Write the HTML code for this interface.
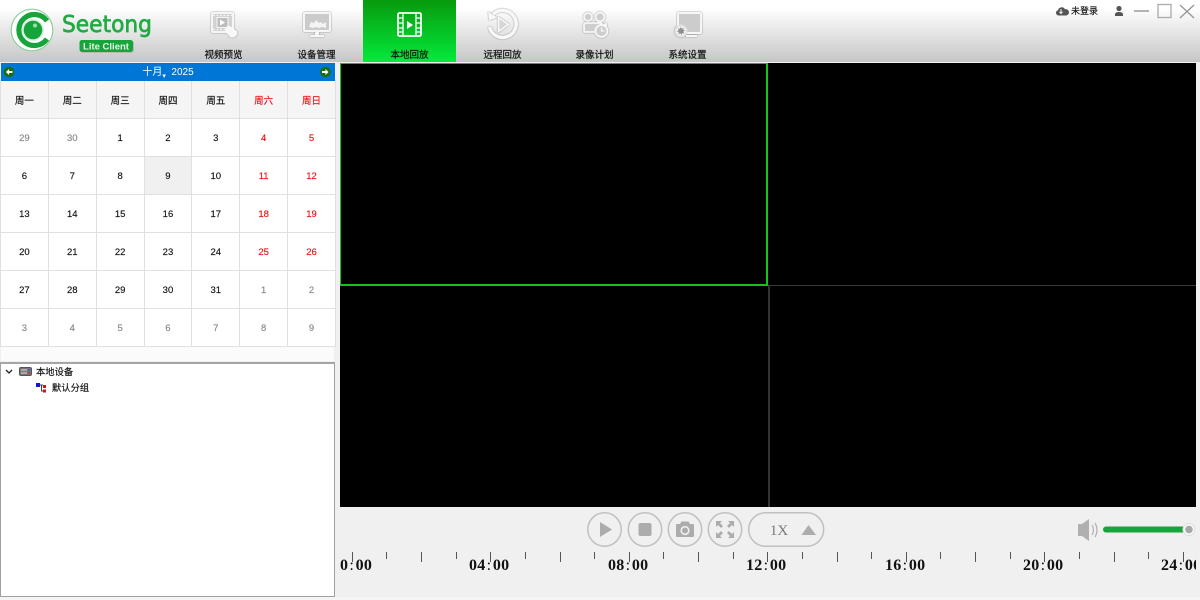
<!DOCTYPE html>
<html lang="zh">
<head>
<meta charset="utf-8">
<title>Seetong</title>
<style>
html,body{margin:0;padding:0}
body{width:1200px;height:600px;position:relative;overflow:hidden;background:#f0f0f0;font-family:"Liberation Sans","Noto Sans CJK SC",sans-serif;color:#111}
.abs{position:absolute}
#top{left:0;top:0;width:1200px;height:62px;background:linear-gradient(#fff 0,#fff 8px,#c6c6c6 62px)}
#active{left:363px;top:0;width:93px;height:62px;background:linear-gradient(#079a0d,#03ea3b)}
.nav{position:absolute;top:48px;width:93px;text-align:center;font-size:9.5px;line-height:15px;color:#111;white-space:nowrap;-webkit-text-stroke:.2px #111}
svg{position:absolute;overflow:visible}
#calbar{left:1px;top:63px;width:334px;height:18px;background:#0076d6;color:#fff;font-size:10px;line-height:20px;text-align:center}
table{position:absolute;left:0;top:80px;width:336px;height:267px;border-collapse:collapse;table-layout:fixed;background:#fff}
td{border:1px solid #e0e0e0;text-align:center;font-size:9.5px;padding:2px 0 0;color:#111;-webkit-text-stroke:.15px;box-sizing:border-box;height:38px}
tr:first-child td{background:#f5f5f5;padding:0}
.r{color:#f01010}.g{color:#888}
#strip{left:1px;top:347px;width:333px;height:14px;background:#fbfbfb}
#tree{left:0;top:362px;width:333px;height:232px;background:#fff;border:1px solid #a0a0a0;border-top:2px solid #a6a6a6}
.t{position:absolute;font-size:9.3px;line-height:14px;color:#111;white-space:nowrap;-webkit-text-stroke:.15px #111}
#video{left:340px;top:63px;width:856px;height:444px;background:#000}
.tl{position:absolute;top:557px;font-family:"Liberation Serif","Noto Serif CJK SC",serif;font-size:16px;line-height:18px;font-weight:700;color:#111;letter-spacing:.3px;white-space:nowrap}
.tl i{font-style:normal;font-weight:400;margin:0 1.500px 0 1px}
.tick{position:absolute;top:552px;width:1px;background:#555}
.ic{filter:drop-shadow(0 0 .8px #777)}
</style>
</head>
<body>
<div id="top" class="abs"></div>
<div id="active" class="abs"></div>

<!-- logo -->
<svg style="left:0;top:0" width="170" height="62" viewBox="0 0 170 62">
  <circle cx="32" cy="30" r="20.800" fill="#fff" stroke="#8fd09a" stroke-width="1.200"/>
  <path d="M47 21A15.500 15.500 0 1 0 47 39" fill="none" stroke="#16a53a" stroke-width="5.200"/>
  <circle cx="33" cy="30" r="11" fill="#d8f0dc"/>
  <circle cx="33" cy="30" r="9.300" fill="#16a53a"/>
  <circle cx="35" cy="25.500" r="2" fill="#9be0a8"/>
  <rect x="81" y="41" width="53" height="12" rx="2.500" fill="#b8b8b8"/>
  <rect x="79.500" y="40" width="53.500" height="12" rx="2.500" fill="#16a53a"/>
  <text x="106" y="49.500" text-anchor="middle" font-family="Liberation Sans" font-size="9.500" font-weight="700" fill="#e6f8e8">Lite Client</text>
  <text x="62" y="32" font-family="DejaVu Sans" font-size="23.500" fill="#20ab45" stroke="#20ab45" stroke-width=".7" textLength="90" lengthAdjust="spacingAndGlyphs">Seetong</text>
</svg>

<!-- nav icons -->
<svg style="left:0;top:0" width="720" height="46" viewBox="0 0 720 46" fill="none">
  <!-- video preview -->
  <g class="ic">
    <rect x="212" y="13" width="21" height="19" rx="1" fill="#d2d2d2" stroke="#f6f6f6" stroke-width="2"/>
    <rect x="217" y="17.500" width="11" height="10" fill="#bdbdbd" stroke="#f6f6f6" stroke-width="1"/>
    <path d="M220 19.500l5 3-5 3z" fill="#fff"/>
    <path d="M213 15.500h19M213 29.500h19" stroke="#f6f6f6" stroke-dasharray="2 1.500"/>
    <path d="M226 27l3-1.500 8 5.500c1 2-.4 5.500-3 6.500h-3.500l-5.500-6z" fill="#f8f8f8"/>
  </g>
  <!-- device mgmt -->
  <g class="ic">
    <rect x="304" y="13" width="26" height="18" rx="1" fill="#cbcbcb" stroke="#f6f6f6" stroke-width="2"/>
    <path d="M309 27l2-5 3 1 2-3 3 3 2-1 2 2 3-2v6l-4-1-3 1-3-1-3 1z" fill="#f4f4f4"/>
    <path d="M317 32v3" stroke="#f6f6f6" stroke-width="4"/>
    <path d="M310 36h14" stroke="#f6f6f6" stroke-width="2.200"/>
  </g>
  <!-- local playback -->
  <g stroke="#fff">
    <rect x="398" y="13" width="23" height="23" rx="1.500" stroke-width="1.800"/>
    <path d="M403 13v23M416 13v23M398 18h5M398 23h5M398 28h5M398 32h5M416 18h5M416 23h5M416 28h5M416 32h5" stroke-width="1.300"/>
    <path d="M407 21l6 4-6 4z" fill="#fff" stroke="none"/>
  </g>
  <!-- remote playback -->
  <g class="ic">
    <path d="M493 14.500A13.500 13.500 0 1 1 489.500 27" stroke="#f8f8f8" stroke-width="3.500"/>
    <path d="M488 11.500l1 9 8-3z" fill="#f8f8f8"/>
    <path d="M498.500 17.500l10 7-10 7z" fill="#d6d6d6" stroke="#f8f8f8" stroke-width="1.600" stroke-linejoin="round"/>
  </g>
  <!-- record plan -->
  <g class="ic" fill="#cecece" stroke="#f8f8f8" stroke-width="1.800">
    <circle cx="588" cy="17" r="4"/><circle cx="600" cy="17" r="4.500"/>
    <rect x="584" y="23" width="18" height="9" rx="1.500"/>
    <path d="M602 26l4-2v6"/>
    <circle cx="601.500" cy="31" r="6"/>
    <path d="M601.500 27.500v3.500h3" fill="none" stroke-width="1.200"/>
  </g>
  <!-- settings -->
  <g class="ic">
    <rect x="678" y="13" width="23" height="20" rx="1" fill="#cccccc" stroke="#f6f6f6" stroke-width="2"/>
    <path d="M686 36h11" stroke="#f6f6f6" stroke-width="2.200"/>
    <circle cx="681" cy="31" r="6.500" fill="#e2e2e2"/>
    <circle cx="681" cy="31" r="3.800" fill="#8f8f8f" stroke="#f6f6f6" stroke-width="2" stroke-dasharray="2 1"/>
  </g>
</svg>
<div class="nav" style="left:177px">视频预览</div>
<div class="nav" style="left:270px">设备管理</div>
<div class="nav" style="left:363px">本地回放</div>
<div class="nav" style="left:456px">远程回放</div>
<div class="nav" style="left:548px">录像计划</div>
<div class="nav" style="left:641px">系统设置</div>

<!-- window controls -->
<svg style="left:1040px;top:0" width="160" height="30" viewBox="0 0 160 30">
  <path d="M18.500 15.500a2.700 2.700 0 0 1-.5-5.300 3.800 3.800 0 0 1 7-1 3.200 3.200 0 0 1 1.500 6.300z" fill="#555"/>
  <path d="M21.500 9v2.800h1.700l-2.200 2.400-2.200-2.400h1.700V9z" fill="#eee"/>
  <circle cx="79" cy="8.500" r="2.600" fill="#555"/>
  <path d="M75 16v-1.500q0-2.500 4-2.500t4 2.500V16z" fill="#555"/>
  <path d="M94 11h15" stroke="#999" stroke-width="1.500"/>
  <rect x="118" y="4.500" width="13" height="13" fill="none" stroke="#aaa" stroke-width="1.300"/>
  <path d="M140 5l14 13M154 5l-14 13" stroke="#999" stroke-width="1.400"/>
</svg>
<div class="t" style="left:1071px;top:4px;font-size:9px">未登录</div>

<!-- calendar -->
<table>
<tr><td>周一</td><td>周二</td><td>周三</td><td>周四</td><td>周五</td><td class="r">周六</td><td class="r">周日</td></tr>
<tr><td class="g">29</td><td class="g">30</td><td>1</td><td>2</td><td>3</td><td class="r">4</td><td class="r">5</td></tr>
<tr><td>6</td><td>7</td><td>8</td><td style="background:#f0f0f0">9</td><td>10</td><td class="r">11</td><td class="r">12</td></tr>
<tr><td>13</td><td>14</td><td>15</td><td>16</td><td>17</td><td class="r">18</td><td class="r">19</td></tr>
<tr><td>20</td><td>21</td><td>22</td><td>23</td><td>24</td><td class="r">25</td><td class="r">26</td></tr>
<tr><td>27</td><td>28</td><td>29</td><td>30</td><td>31</td><td class="g">1</td><td class="g">2</td></tr>
<tr><td class="g">3</td><td class="g">4</td><td class="g">5</td><td class="g">6</td><td class="g">7</td><td class="g">8</td><td class="g">9</td></tr>
</table>
<div id="calbar" class="abs">十月<span style="font-size:7px;position:relative;top:3px">▾</span>&nbsp;&nbsp;2025</div>
<svg style="left:3px;top:65px" width="330" height="14" viewBox="0 0 330 14">
  <circle cx="6" cy="7" r="5.300" fill="#1c6e12"/><path d="M3 7l3-3v2h3.500v2H6v2z" fill="#fff"/>
  <circle cx="322.500" cy="7" r="5.300" fill="#1c6e12"/><path d="M325.500 7l-3-3v2H319v2h3.500v2z" fill="#fff"/>
</svg>
<div id="strip" class="abs"></div>

<!-- tree -->
<div id="tree" class="abs"></div>
<svg style="left:0;top:362px" width="100" height="36" viewBox="0 0 100 36">
  <path d="M6 8l3 3 3-3" fill="none" stroke="#222" stroke-width="1.300"/>
  <rect x="19.500" y="5.500" width="12" height="8" rx="1.500" fill="#777" stroke="#555"/>
  <path d="M21 8h6M21 11h6" stroke="#ddd"/>
  <rect x="28" y="7" width="2" height="1.500" fill="#36c"/><rect x="28" y="10" width="2" height="1.500" fill="#c33"/>
  <rect x="36" y="21" width="4" height="4" fill="#1414d8"/>
  <rect x="43" y="23" width="3" height="3" fill="#d81414"/>
  <rect x="43" y="27.500" width="3" height="3" fill="#d81414"/>
  <path d="M40 23h3M41.500 23v6h2" stroke="#444" fill="none"/>
</svg>
<div class="t" style="left:36px;top:365px">本地设备</div>
<div class="t" style="left:52px;top:381px">默认分组</div>

<!-- video grid -->
<div id="video" class="abs"></div>
<div class="abs" style="left:768px;top:286px;width:2px;height:221px;background:#333"></div>
<div class="abs" style="left:768px;top:285px;width:428px;height:1px;background:#3a3a3a"></div>
<div class="abs" style="left:340px;top:63px;width:428px;height:1px;background:#14c41c"></div>
<div class="abs" style="left:340px;top:63px;width:1px;height:222px;background:#14c41c"></div>
<div class="abs" style="left:766px;top:63px;width:2px;height:222px;background:#14c41c"></div>
<div class="abs" style="left:340px;top:284px;width:428px;height:2px;background:#14c41c"></div>

<!-- playback buttons -->
<svg style="left:580px;top:510px" width="260" height="40" viewBox="0 0 260 40">
  <g fill="none" stroke="#c0c0c0" stroke-width="1.500">
    <circle cx="24.500" cy="19.500" r="16.700"/>
    <circle cx="65" cy="19.500" r="16.700"/>
    <circle cx="105" cy="19.500" r="16.700"/>
    <circle cx="145" cy="19.500" r="16.700"/>
    <rect x="168.700" y="2.800" width="75" height="33.400" rx="16.700"/>
  </g>
  <path d="M20 12l12 7.500-12 7.500z" fill="#acacac"/>
  <rect x="58.500" y="13" width="13" height="13" rx="2" fill="#acacac"/>
  <path d="M97 14h3l1.500-2.500h7l1.500 2.500h3a1 1 0 0 1 1 1v11a1 1 0 0 1-1 1H97a1 1 0 0 1-1-1V15a1 1 0 0 1 1-1z" fill="#acacac"/>
  <circle cx="105" cy="20.500" r="4.600" fill="#f0f0f0"/><circle cx="105" cy="20.500" r="3" fill="#acacac"/>
  <g fill="#acacac">
    <path d="M136 11h6l-2 2 3 3-2 2-3-3-2 2z"/>
    <path d="M154 11h-6l2 2-3 3 2 2 3-3 2 2z"/>
    <path d="M136 28h6l-2-2 3-3-2-2-3 3-2-2z"/>
    <path d="M154 28h-6l2-2-3-3 2-2 3 3 2-2z"/>
  </g>
  <text x="199" y="25" text-anchor="middle" font-family="Liberation Serif" font-size="15" fill="#777">1X</text>
  <path d="M221.500 25l7-10 7.500 10z" fill="#acacac"/>
</svg>

<!-- volume -->
<svg style="left:1070px;top:510px" width="130" height="40" viewBox="0 0 130 40">
  <path d="M8 14h4l7-5v22l-7-5H8z" fill="#b0b0b0"/>
  <path d="M22 15q3 5 0 10M25 13q4 7 0 14" fill="none" stroke="#b0b0b0" stroke-width="1.200"/>
  <rect x="33" y="16.500" width="85" height="6" rx="3" fill="#16a53a"/>
  <circle cx="119" cy="19.500" r="6" fill="#f8f8f8" stroke="#ddd"/>
  <circle cx="119" cy="19.500" r="3.800" fill="#a8a8a8"/>
</svg>

<!-- timeline ticks -->
<div class="tick" style="left:352px;height:10px"></div>
<div class="tick" style="left:386px;height:7px"></div>
<div class="tick" style="left:421px;height:10px"></div>
<div class="tick" style="left:456px;height:7px"></div>
<div class="tick" style="left:490px;height:10px"></div>
<div class="tick" style="left:525px;height:7px"></div>
<div class="tick" style="left:560px;height:10px"></div>
<div class="tick" style="left:594px;height:7px"></div>
<div class="tick" style="left:629px;height:10px"></div>
<div class="tick" style="left:663px;height:7px"></div>
<div class="tick" style="left:698px;height:10px"></div>
<div class="tick" style="left:733px;height:7px"></div>
<div class="tick" style="left:767px;height:10px"></div>
<div class="tick" style="left:802px;height:7px"></div>
<div class="tick" style="left:837px;height:10px"></div>
<div class="tick" style="left:871px;height:7px"></div>
<div class="tick" style="left:906px;height:10px"></div>
<div class="tick" style="left:940px;height:7px"></div>
<div class="tick" style="left:975px;height:10px"></div>
<div class="tick" style="left:1010px;height:7px"></div>
<div class="tick" style="left:1044px;height:10px"></div>
<div class="tick" style="left:1079px;height:7px"></div>
<div class="tick" style="left:1114px;height:10px"></div>
<div class="tick" style="left:1148px;height:7px"></div>
<div class="tick" style="left:1183px;height:10px"></div>

<div class="tl" style="left:340px">0<i>:</i>00</div>
<div class="tl" style="left:469px">04<i>:</i>00</div>
<div class="tl" style="left:608px">08<i>:</i>00</div>
<div class="tl" style="left:746px">12<i>:</i>00</div>
<div class="tl" style="left:885px">16<i>:</i>00</div>
<div class="tl" style="left:1023px">20<i>:</i>00</div>
<div class="tl" style="left:1161px;width:35px;overflow:hidden">24<i>:</i>00</div>

<div class="abs" style="left:0;top:597px;width:1200px;height:3px;background:#f5f5f5"></div>
</body>
</html>
